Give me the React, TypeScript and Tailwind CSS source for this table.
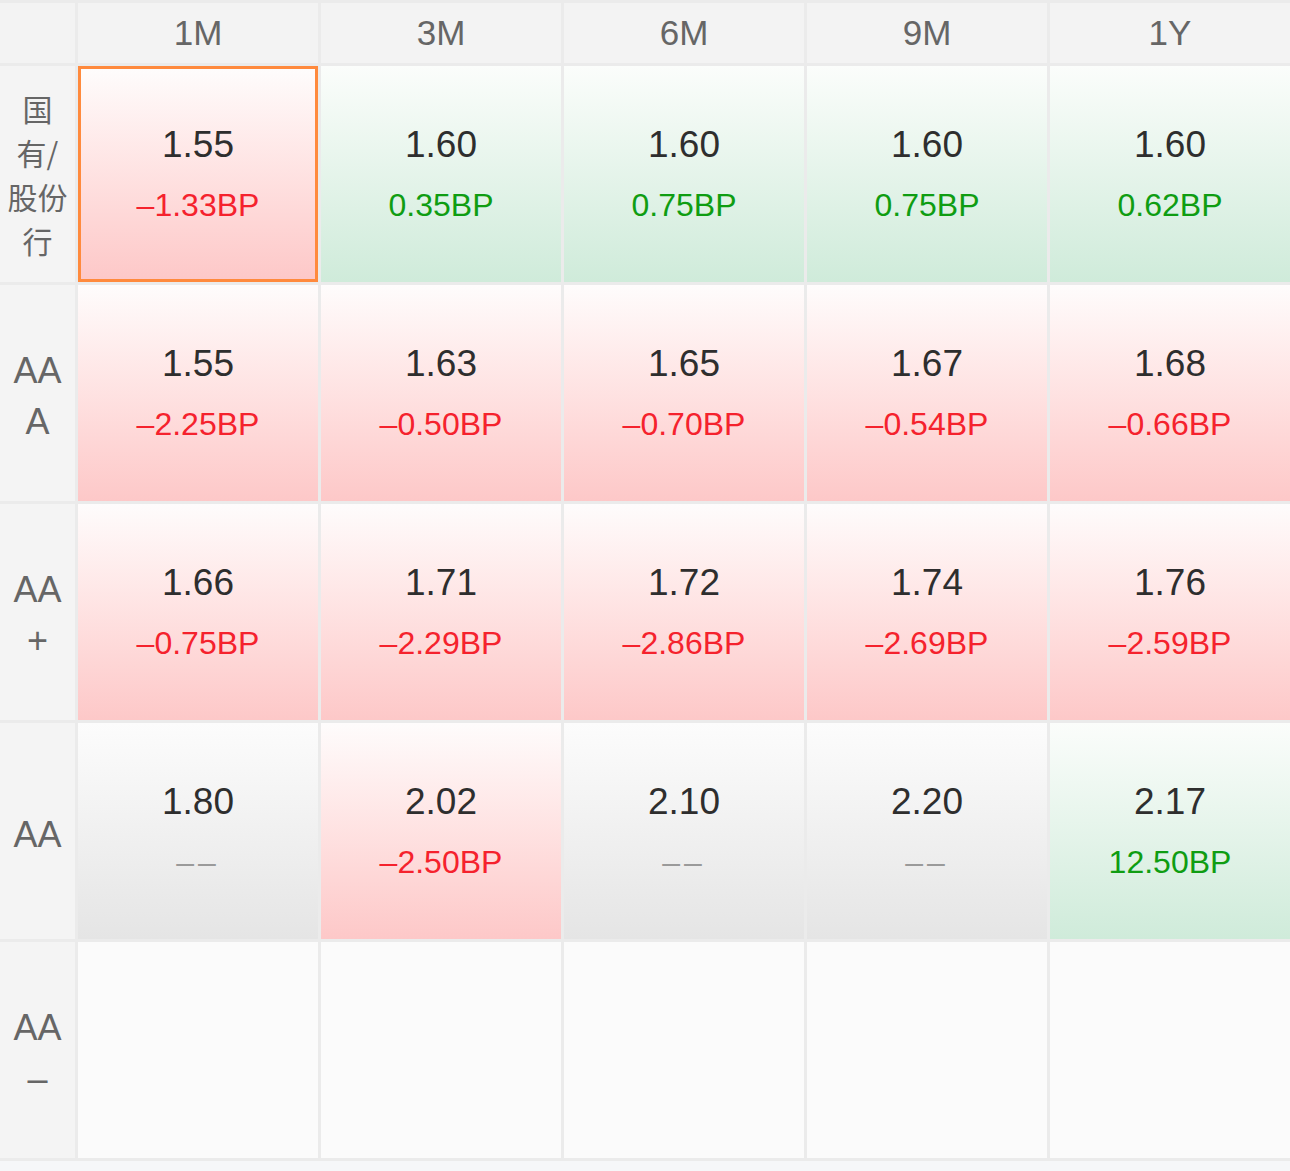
type Tone = 'up' | 'down' | 'flat' | 'empty';

type Cell = {
  rate?: string;
  bp?: string;
  tone: Tone;
  active?: boolean;
};

type Row = {
  label: string[];
  cjk?: boolean;
  cells: Cell[];
};

const terms = ['1M', '3M', '6M', '9M', '1Y'];

const rows: Row[] = [
  {
    label: ['国', '有/', '股份', '行'],
    cjk: true,
    cells: [
      { rate: '1.55', bp: '–1.33BP', tone: 'down', active: true },
      { rate: '1.60', bp: '0.35BP', tone: 'up' },
      { rate: '1.60', bp: '0.75BP', tone: 'up' },
      { rate: '1.60', bp: '0.75BP', tone: 'up' },
      { rate: '1.60', bp: '0.62BP', tone: 'up' },
    ],
  },
  {
    label: ['AA', 'A'],
    cells: [
      { rate: '1.55', bp: '–2.25BP', tone: 'down' },
      { rate: '1.63', bp: '–0.50BP', tone: 'down' },
      { rate: '1.65', bp: '–0.70BP', tone: 'down' },
      { rate: '1.67', bp: '–0.54BP', tone: 'down' },
      { rate: '1.68', bp: '–0.66BP', tone: 'down' },
    ],
  },
  {
    label: ['AA', '+'],
    cells: [
      { rate: '1.66', bp: '–0.75BP', tone: 'down' },
      { rate: '1.71', bp: '–2.29BP', tone: 'down' },
      { rate: '1.72', bp: '–2.86BP', tone: 'down' },
      { rate: '1.74', bp: '–2.69BP', tone: 'down' },
      { rate: '1.76', bp: '–2.59BP', tone: 'down' },
    ],
  },
  {
    label: ['AA'],
    cells: [
      { rate: '1.80', tone: 'flat' },
      { rate: '2.02', bp: '–2.50BP', tone: 'down' },
      { rate: '2.10', tone: 'flat' },
      { rate: '2.20', tone: 'flat' },
      { rate: '2.17', bp: '12.50BP', tone: 'up' },
    ],
  },
  {
    label: ['AA', '–'],
    cells: [{ tone: 'empty' }, { tone: 'empty' }, { tone: 'empty' }, { tone: 'empty' }, { tone: 'empty' }],
  },
];

const bgByTone: Record<Tone, string> = {
  down: 'bg-gradient-to-b from-[#fefcfc] to-[#fdc8c8]',
  up: 'bg-gradient-to-b from-[#fbfdfb] to-[#cfebda]',
  flat: 'bg-gradient-to-b from-[#fcfcfc] to-[#e5e5e5]',
  empty: 'bg-[#fbfbfb]',
};

const bpColor: Record<Tone, string> = {
  down: 'text-[#f5222d]',
  up: 'text-[#0f9d12]',
  flat: 'text-[#999999]',
  empty: '',
};

const RateCell = ({ cell }: { cell: Cell }) => (
  <div
    className={`${bgByTone[cell.tone]} flex flex-col items-center justify-center ${
      cell.active ? 'border-[3px] border-[#ff8a3d]' : ''
    }`}
  >
    {cell.rate ? (
      <>
        <span className="text-[37px] leading-[44px] text-[#2e2e2e]">{cell.rate}</span>
        <span className={`mt-[18px] text-[32px] leading-[40px] ${bpColor[cell.tone]}`}>
          {cell.bp ?? (
            <span className="tracking-[4px] text-[#9a9a9a]">––</span>
          )}
        </span>
      </>
    ) : null}
  </div>
);

export default function App() {
  return (
    <div className="min-h-screen bg-[#f6f7f9] font-['Liberation_Sans','Noto_Sans_CJK_SC',sans-serif]">
      <div className="grid grid-cols-[75px_repeat(5,240px)] grid-rows-[60px_repeat(5,216px)] gap-[3px] bg-[#ebebeb] pt-[3px] pb-[3px]">
        <div className="bg-[#f3f3f3]" />
        {terms.map((t) => (
          <div key={t} className="flex items-center justify-center bg-[#f3f3f3] text-[35px] text-[#666666]">
            {t}
          </div>
        ))}

        {rows.map((row, i) => (
          <div key={i} className="contents">
            <div
              className={`flex flex-col items-center justify-center bg-[#f4f4f4] text-[#666666] ${
                row.cjk ? '' : 'pt-[6px]'
              }`}
            >
              {row.label.map((l, j) =>
                row.cjk ? (
                  <span key={j} className="text-[30px] leading-[44px] font-['Noto_Sans_CJK_SC',sans-serif]">
                    {l}
                  </span>
                ) : (
                  <span key={j} className="text-[36px] leading-[51px]">
                    {l}
                  </span>
                )
              )}
            </div>
            {row.cells.map((c, k) => (
              <RateCell key={k} cell={c} />
            ))}
          </div>
        ))}
      </div>
    </div>
  );
}
